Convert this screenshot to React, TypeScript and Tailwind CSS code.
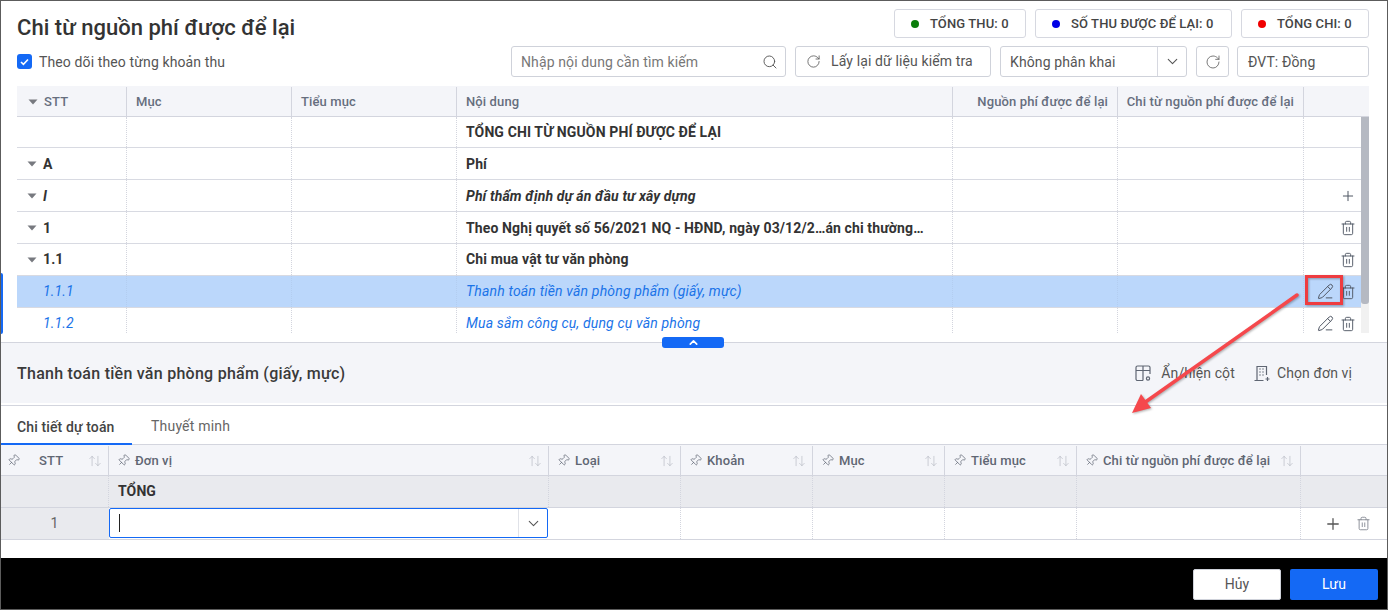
import { ArrowUpDown, ChevronDown, ChevronUp, PencilLine, Pin, Plus, RotateCw, Search, Trash2 } from 'lucide-react';

const topCols = 'grid grid-cols-[110px_165px_165px_496px_165px_186px_65px]';
const bottomCols = 'grid grid-cols-[108px_440px_132px_132px_132px_132px_224px_86px]';

function Caret() {
  return (
    <svg width="10" height="6" viewBox="0 0 10 6" className="shrink-0">
      <path d="M0.5 0.5h9L5 5.5z" fill="#77797f" />
    </svg>
  );
}

function Pill({ color, label, width }: { color: string; label: string; width: string }) {
  return (
    <div className={`flex h-[29px] items-center gap-[11px] rounded-[3px] border border-[#d6d8e0] pl-[16px] text-[13px] font-medium text-[#444] ${width}`}>
      <span className={`h-2 w-2 rounded-full ${color}`} />
      <span>{label}</span>
    </div>
  );
}

type Row = {
  stt?: string;
  text: string;
  caret?: boolean;
  h: string;
  weight: string;
  color: string;
  selected?: boolean;
  nudge?: boolean;
  action?: 'plus' | 'trash' | 'both';
};

const rows: Row[] = [
  { text: 'TỔNG CHI TỪ NGUỒN PHÍ ĐƯỢC ĐỂ LẠI', h: 'h-[31px]', weight: 'font-bold', color: 'text-[#333]' },
  { stt: 'A', caret: true, nudge: true, text: 'Phí', h: 'h-8', weight: 'font-bold', color: 'text-[#333]' },
  { stt: 'I', caret: true, nudge: true, text: 'Phí thẩm định dự án đầu tư xây dựng', h: 'h-8', weight: 'font-bold italic', color: 'text-[#333]', action: 'plus' },
  { stt: '1', caret: true, nudge: true, text: 'Theo Nghị quyết số 56/2021 NQ - HĐND, ngày 03/12/2…án chi thường…', h: 'h-8', weight: 'font-bold', color: 'text-[#333]', action: 'trash' },
  { stt: '1.1', caret: true, text: 'Chi mua vật tư văn phòng', h: 'h-8', weight: 'font-bold', color: 'text-[#333]', action: 'trash' },
  { stt: '1.1.1', text: 'Thanh toán tiền văn phòng phẩm (giấy, mực)', h: 'h-8', weight: 'italic tracking-[0.17px]', color: 'text-[#1a73e8]', selected: true, action: 'both' },
  { stt: '1.1.2', text: 'Mua sắm công cụ, dụng cụ văn phòng', h: 'h-8', weight: 'italic tracking-[0.17px]', color: 'text-[#1a73e8]', action: 'both' },
];

function TableRow({ row }: { row: Row }) {
  const cell = `flex items-center border-r border-dotted ${row.selected ? 'border-[#b3cdf0]' : 'border-[#d3d5de]'}`;
  const nudge = row.nudge ? 'pt-[2px]' : '';
  return (
    <div className={`${topCols} ${row.h} border-b border-[#d8dae2] text-[14px] ${row.color} ${row.weight} ${row.selected ? 'bg-[#bbd7fb]' : ''}`}>
      <div className={`${cell} ${row.caret ? 'pl-[10px]' : 'pl-[26px]'} gap-[6px]`}>
        {row.caret && <Caret />}
        <span className={nudge}>{row.stt}</span>
      </div>
      <div className={cell} />
      <div className={cell} />
      <div className={`${cell} pl-[9px] whitespace-nowrap overflow-hidden`}>
        <span className={nudge}>{row.text}</span>
      </div>
      <div className={cell} />
      <div className={cell} />
      <div className="flex items-center justify-end gap-[6px] pr-[13px] text-[#4f5663]">
        {row.action === 'plus' && <Plus size={16} strokeWidth={1.5} />}
        {row.action === 'both' && <PencilLine size={17} strokeWidth={1.4} />}
        {row.action && row.action !== 'plus' && <Trash2 size={16} strokeWidth={1.4} />}
      </div>
    </div>
  );
}

function BottomHead({ label, first }: { label: string; first?: boolean }) {
  return (
    <div className={`flex items-center gap-[5px] border-r border-[#d3d5de] pr-[6px] ${first ? 'pl-[6px]' : 'pl-[8px]'}`}>
      <Pin size={13} strokeWidth={1.3} className="rotate-45 shrink-0 text-[#5f6673]" />
      <span className={`font-medium text-[13px] text-[#5f6673] whitespace-nowrap ${first ? 'pl-[14px]' : ''}`}>{label}</span>
      <ArrowUpDown size={14} strokeWidth={1} className="ml-auto shrink-0 text-[#aeb2bc]" />
    </div>
  );
}

function TableIcon() {
  return (
    <svg width="17" height="17" viewBox="0 0 17 17" fill="none" stroke="#5f6673" strokeWidth="1.2">
      <path d="M8 15.5H2.5a1.5 1.5 0 0 1-1.5-1.5V2.5A1.5 1.5 0 0 1 2.5 1h11A1.5 1.5 0 0 1 15 2.5V9M1 5.5h14M8 1v14.5" />
      <circle cx="13" cy="13.5" r="1.6" />
    </svg>
  );
}

function UnitIcon() {
  return (
    <svg width="17" height="17" viewBox="0 0 17 17" fill="none" stroke="#5f6673" strokeWidth="1.2">
      <path d="M0.5 15.5h9M3 15.5V1.5h9.5V10M13.5 12v4M11.5 14h4" />
      <path d="M5.5 4h1M8.5 4h1M5.5 7h1M8.5 7h1M5.5 10h1M8.5 10h1" strokeWidth="1.3" />
    </svg>
  );
}

export default function App() {
  return (
    <div className="relative flex h-[610px] w-[1388px] flex-col overflow-hidden border border-[#5c5c5c] bg-white font-['Roboto',sans-serif] tracking-[0.12px] text-[#333]">
      {/* Top part */}
      <div className="h-[341px] shrink-0 px-4">
        <div className="flex h-[36px] items-start justify-between pt-[8px]">
          <h1 className="mt-[5px] text-[22px] leading-[28px] font-medium tracking-[0.03px] text-[#333]">Chi từ nguồn phí được để lại</h1>
          <div className="flex gap-[9px] pr-[2px]">
            <Pill color="bg-[#0a7d0a]" label="TỔNG THU: 0" width="w-[132px]" />
            <Pill color="bg-[#0000e6]" label="SỐ THU ĐƯỢC ĐỂ LẠI: 0" width="w-[197px]" />
            <Pill color="bg-[#f00000]" label="TỔNG CHI: 0" width="w-[128px]" />
          </div>
        </div>
        <div className="mt-[9px] flex h-[31px] items-center justify-between pr-[2px] text-[14px] text-[#555]">
          <label className="flex items-center gap-[7px]">
            <span className="flex h-[15px] w-[15px] items-center justify-center rounded-[3px] bg-[#1469f5]">
              <svg width="9" height="8" viewBox="0 0 9 8" fill="none" stroke="#fff" strokeWidth="1.6">
                <path d="M1 4l2.4 2.4L8 1.5" />
              </svg>
            </span>
            <span className="pt-[2px]">Theo dõi theo từng khoản thu</span>
          </label>
          <div className="flex">
            <div className="flex h-[31px] w-[275px] items-center justify-between rounded-[3px] border border-[#cfd2da] pl-[9px] pr-[7px]">
              <span className="pt-[1px] text-[#777]">Nhập nội dung cần tìm kiếm</span>
              <Search size={16} strokeWidth={1.4} className="text-[#555]" />
            </div>
            <div className="ml-[9px] flex h-[31px] w-[196px] items-center gap-[10px] rounded-[3px] border border-[#cfd2da] pl-[10px]">
              <RotateCw size={15} strokeWidth={1.3} className="text-[#555]" />
              <span>Lấy lại dữ liệu kiểm tra</span>
            </div>
            <div className="ml-[9px] flex h-[31px] w-[187px] items-center rounded-[3px] border border-[#cfd2da]">
              <span className="flex-1 pl-[9px] pt-[1px]">Không phân khai</span>
              <span className="flex h-full w-[29px] items-center justify-center border-l border-[#d6d8e0]">
                <ChevronDown size={17} strokeWidth={1.5} className="text-[#555]" />
              </span>
            </div>
            <div className="ml-[9px] flex h-[31px] w-[33px] items-center justify-center rounded-[3px] border border-[#cfd2da]">
              <RotateCw size={16} strokeWidth={1.3} className="text-[#666]" />
            </div>
            <div className="ml-[8px] flex h-[31px] w-[132px] items-center rounded-[3px] border border-[#cfd2da] pl-[10px] pt-[1px]">ĐVT: Đồng</div>
          </div>
        </div>

        <div className="relative mt-[9px] w-[1352px] text-[13px]">
          <div className={`${topCols} h-[31px] border-b border-[#d3d5de] bg-[#f4f5f9] pt-[1px] font-medium text-[#666e7e]`}>
            <div className="flex items-center gap-[6px] border-r border-[#d3d5de] pl-[11px]">
              <Caret />
              STT
            </div>
            <div className="flex items-center border-r border-[#d3d5de] pl-[9px]">Mục</div>
            <div className="flex items-center border-r border-[#d3d5de] pl-[9px]">Tiểu mục</div>
            <div className="flex items-center border-r border-[#d3d5de] pl-[9px]">Nội dung</div>
            <div className="flex items-center justify-end border-r border-[#d3d5de] pr-[9px]">Nguồn phí được để lại</div>
            <div className="flex items-center justify-end border-r border-[#d3d5de] pr-[9px]">Chi từ nguồn phí được để lại</div>
            <div />
          </div>
          <div className="h-[216px] overflow-hidden">
            {rows.map((row) => (
              <TableRow key={row.text} row={row} />
            ))}
          </div>
          {/* scrollbar */}
          <div className="absolute right-0 top-[31px] h-[216px] w-2 bg-[#f1f1f1]">
            <div className="h-[187px] rounded-b-[3px] bg-[#b5b9c2]" />
          </div>
        </div>
      </div>

      {/* Detail header */}
      <div className="h-[61px] shrink-0 border-t border-[#d3d5de] bg-[#f4f5f9] flex items-center justify-between pl-4 pr-[35px]">
        <div className="pt-[1px] text-[16px] font-medium tracking-[0.26px] text-[#3a3a3a]">Thanh toán tiền văn phòng phẩm (giấy, mực)</div>
        <div className="flex items-center gap-[19px] text-[14px] text-[#555]">
          <span className="flex items-center gap-[9px]">
            <TableIcon />
            Ẩn/hiện cột
          </span>
          <span className="flex items-center gap-[6px]">
            <UnitIcon />
            Chọn đơn vị
          </span>
        </div>
      </div>

      {/* Tabs */}
      <div className="mt-[2px] flex h-[40px] shrink-0 border-y border-[#d3d5de] text-[14px]">
        <div className="-mb-px flex w-[131px] items-center border-b-2 border-[#1469f5] pl-4 pt-[5px] font-medium text-[#444]">Chi tiết dự toán</div>
        <div className="flex items-center pl-[19px] pt-[3px] tracking-[0.2px] text-[#666]">Thuyết minh</div>
      </div>

      {/* Detail table */}
      <div className={`${bottomCols} h-[31px] shrink-0 border-b border-[#d3d5de] bg-[#f4f5f9] pt-[1px]`}>
        <BottomHead label="STT" first />
        <BottomHead label="Đơn vị" />
        <BottomHead label="Loại" />
        <BottomHead label="Khoản" />
        <BottomHead label="Mục" />
        <BottomHead label="Tiểu mục" />
        <BottomHead label="Chi từ nguồn phí được để lại" />
        <div />
      </div>
      <div className={`${bottomCols} h-8 shrink-0 border-b border-[#d3d5de] bg-[#e9eaee] text-[14px] font-bold text-[#333]`}>
        <div className="border-r border-dotted border-[#d3d5de]" />
        <div className="flex items-center border-r border-dotted border-[#d3d5de] pl-[9px]">TỔNG</div>
        <div className="border-r border-dotted border-[#d3d5de]" />
        <div className="border-r border-dotted border-[#d3d5de]" />
        <div className="border-r border-dotted border-[#d3d5de]" />
        <div className="border-r border-dotted border-[#d3d5de]" />
        <div className="border-r border-dotted border-[#d3d5de]" />
        <div />
      </div>
      <div className={`${bottomCols} h-8 shrink-0 border-b border-[#d3d5de] text-[14px]`}>
        <div className="flex items-center justify-center bg-[#e9eaee] pr-[1px] text-[#666]">1</div>
        <div className="mr-[1px] flex h-[30px] items-center rounded-[2px] border border-[#1469f5] bg-white">
          <div className="flex-1 pl-[9px]">
            <div className="h-[18px] w-px bg-[#222]" />
          </div>
          <div className="flex h-full w-[29px] items-center justify-center border-l border-[#e0e2e8]">
            <ChevronDown size={17} strokeWidth={1.5} className="text-[#555]" />
          </div>
        </div>
        <div className="border-r border-dotted border-[#d3d5de]" />
        <div className="border-r border-dotted border-[#d3d5de]" />
        <div className="border-r border-dotted border-[#d3d5de]" />
        <div className="border-r border-dotted border-[#d3d5de]" />
        <div className="border-r border-dotted border-[#d3d5de]" />
        <div className="flex items-center justify-end gap-[14px] pr-[16px]">
          <Plus size={18} strokeWidth={1.7} className="text-[#555]" />
          <Trash2 size={15} strokeWidth={1.4} className="text-[#80858f]" />
        </div>
      </div>

      {/* Footer */}
      <div className="mt-auto flex h-[51px] shrink-0 items-start justify-end gap-[9px] bg-black pt-[11px] pr-[9px] text-[14px]">
        <button className="h-[31px] w-[88px] rounded-[2px] border border-[#cfd2da] bg-white text-[#555]">Hủy</button>
        <button className="h-[31px] w-[88px] rounded-[2px] bg-[#1469f5] text-white">Lưu</button>
      </div>

      {/* Overlays */}
      <div className="absolute left-[-1px] top-[272px] h-[61px] w-[3px] rounded-r-[2px] bg-[#1469f5]" />
      <div className="absolute left-[661px] top-[336px] flex h-[11px] w-[62px] items-center justify-center rounded-[3px] bg-[#1469f5]">
        <ChevronUp size={13} strokeWidth={3} className="text-white" />
      </div>
      <svg className="pointer-events-none absolute left-[-1px] top-[-1px] drop-shadow-[1px_1px_1px_rgba(0,0,0,0.3)]" width="1388" height="610" fill="none">
        <rect x="1306.5" y="276.5" width="35" height="27" stroke="#ee3c40" strokeWidth="3" />
        <path d="M1297 295L1144 403" stroke="#f5484c" strokeWidth="3.5" strokeLinecap="round" />
        <path d="M1132 413L1151 408L1141 394Z" fill="#f5484c" />
      </svg>
    </div>
  );
}
